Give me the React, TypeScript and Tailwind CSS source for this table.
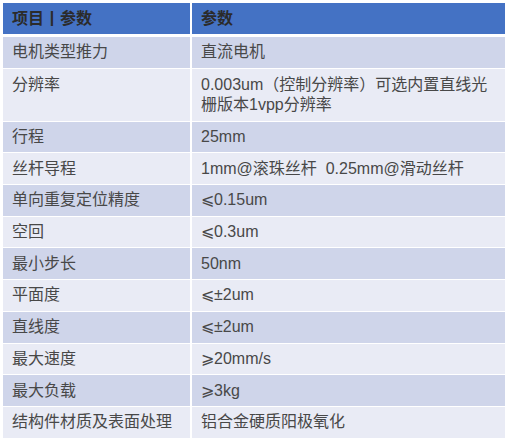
import React from "react"

type Row = { name: string; value: string[]; tall?: boolean }

const rows: Row[] = [
  { name: "电机类型推力", value: ["直流电机"] },
  { name: "分辨率", value: ["0.003um（控制分辨率）可选内置直线光", "栅版本1vpp分辨率"], tall: true },
  { name: "行程", value: ["25mm"] },
  { name: "丝杆导程", value: ["1mm@滚珠丝杆  0.25mm@滑动丝杆"] },
  { name: "单向重复定位精度", value: ["⩽0.15um"] },
  { name: "空回", value: ["⩽0.3um"] },
  { name: "最小步长", value: ["50nm"] },
  { name: "平面度", value: ["⩽±2um"] },
  { name: "直线度", value: ["⩽±2um"] },
  { name: "最大速度", value: ["⩾20mm/s"] },
  { name: "最大负载", value: ["⩾3kg"] },
  { name: "结构件材质及表面处理", value: ["铝合金硬质阳极氧化"] },
]

export default function App() {
  return (
    <div
      className="w-[508px] h-[443px] bg-white pl-[3px] pt-[3px] text-[16px] text-[#484848]"
      style={{ fontFamily: '"Liberation Sans", "Noto Sans CJK SC", sans-serif' }}
    >
      <div className="w-[502px]">
        {/* 表头 */}
        <div className="grid grid-cols-[187px_313px] gap-x-[2px]">
          <div className="h-[31px] bg-[#4472c4] flex items-center pl-[9px] font-bold text-[#2b2b2b]">
            项目丨参数
          </div>
          <div className="h-[31px] bg-[#4472c4] flex items-center pl-[9px] font-bold text-[#2b2b2b]">
            参数
          </div>
        </div>

        <div className="mt-[3px] flex flex-col gap-y-[1px]">
          {rows.map((r, i) => {
            const bg = i % 2 === 0 ? "bg-[#cfd5ea]" : "bg-[#e9ebf5]"
            const cell = r.tall ? "h-[52px] items-start pt-[6px]" : "h-[30.7px] items-center"
            return (
              <div key={r.name} className="grid grid-cols-[187px_313px] gap-x-[2px]">
                <div className={`${bg} ${cell} flex pl-[9px] leading-[20px]`}>{r.name}</div>
                <div className={`${bg} ${cell} flex pl-[9px] leading-[20px] whitespace-pre`}>
                  <div>
                    {r.value.map((line, j) => (
                      <div key={j}>{line}</div>
                    ))}
                  </div>
                </div>
              </div>
            )
          })}
        </div>
      </div>
    </div>
  )
}
